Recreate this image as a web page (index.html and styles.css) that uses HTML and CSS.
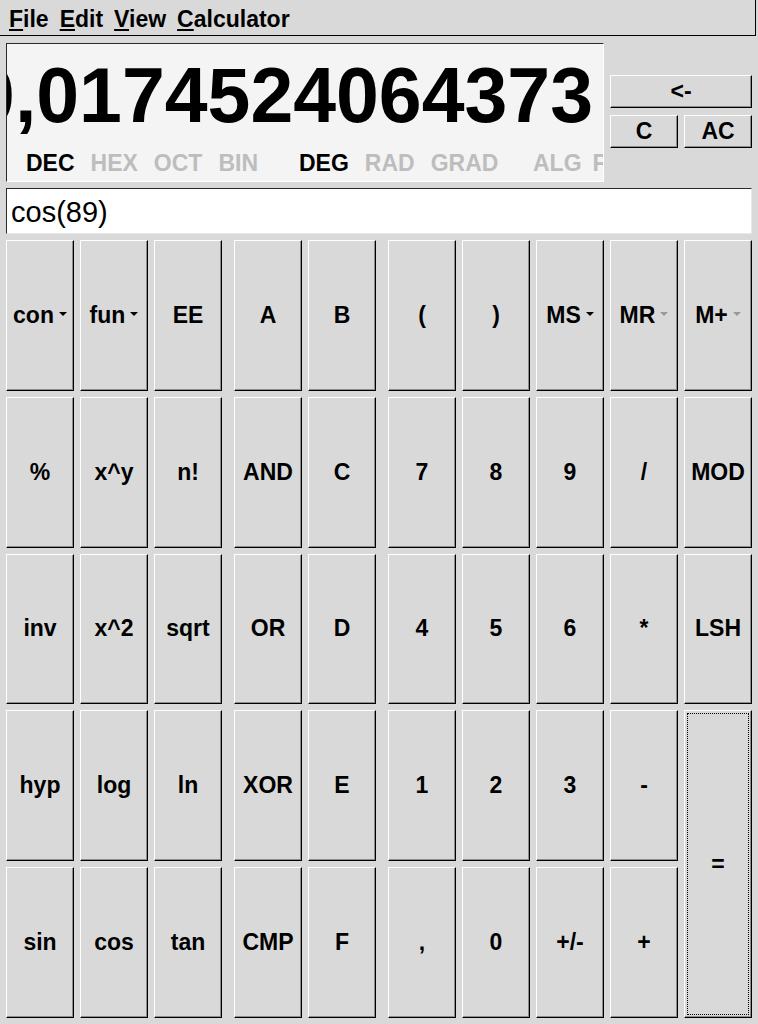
FILE: index.html
```html
<!DOCTYPE html>
<html lang="en">
<head>
    <meta charset="UTF-8">
    <meta name="viewport" content="width=device-width, initial-scale=1.0">
    <title>Calculator</title>
    <link rel="stylesheet" href="styles.css">
</head>
<body>
    <div class="menubar">
        <span><u>F</u>ile</span>
        <span><u>E</u>dit</span>
        <span><u>V</u>iew</span>
        <span><u>C</u>alculator</span>
    </div>

    <div class="main">
        <div class="top">
            <div class="display">
                <div class="number"><span>0,0174524064373</span></div>
                <div class="status">
                    <div class="group base"><span class="on">DEC</span><span>HEX</span><span>OCT</span><span>BIN</span></div>
                    <div class="group angle"><span class="on">DEG</span><span>RAD</span><span>GRAD</span></div>
                    <div class="group mode"><span>ALG</span><span>F</span></div>
                </div>
            </div>
            <div class="edit-keys">
                <button class="key small">&lt;-</button>
                <div class="pair">
                    <button class="key small">C</button>
                    <button class="key small">AC</button>
                </div>
            </div>
        </div>

        <input type="text" class="entry" value="cos(89)">

        <div class="keypad">
            <!-- functions -->
            <div class="block three">
                <button class="key">con<i class="arrow"></i></button>
                <button class="key">fun<i class="arrow"></i></button>
                <button class="key">EE</button>
                <button class="key">%</button>
                <button class="key">x^y</button>
                <button class="key">n!</button>
                <button class="key">inv</button>
                <button class="key">x^2</button>
                <button class="key">sqrt</button>
                <button class="key">hyp</button>
                <button class="key">log</button>
                <button class="key">ln</button>
                <button class="key">sin</button>
                <button class="key">cos</button>
                <button class="key">tan</button>
            </div>
            <!-- logic / hex digits -->
            <div class="block two">
                <button class="key">A</button>
                <button class="key">B</button>
                <button class="key">AND</button>
                <button class="key">C</button>
                <button class="key">OR</button>
                <button class="key">D</button>
                <button class="key">XOR</button>
                <button class="key">E</button>
                <button class="key">CMP</button>
                <button class="key">F</button>
            </div>
            <!-- digits and memory -->
            <div class="block five">
                <button class="key">(</button>
                <button class="key">)</button>
                <button class="key">MS<i class="arrow"></i></button>
                <button class="key">MR<i class="arrow off"></i></button>
                <button class="key">M+<i class="arrow off"></i></button>
                <button class="key">7</button>
                <button class="key">8</button>
                <button class="key">9</button>
                <button class="key">/</button>
                <button class="key">MOD</button>
                <button class="key">4</button>
                <button class="key">5</button>
                <button class="key">6</button>
                <button class="key">*</button>
                <button class="key">LSH</button>
                <button class="key">1</button>
                <button class="key">2</button>
                <button class="key">3</button>
                <button class="key">-</button>
                <button class="key equals">=</button>
                <button class="key">,</button>
                <button class="key">0</button>
                <button class="key">+/-</button>
                <button class="key">+</button>
            </div>
        </div>
    </div>
</body>
</html>
```

FILE: styles.css
```css
body {
    margin: 0;
    padding: 0;
    background-color: #d9d9d9;
    font-family: "Liberation Sans", Arial, sans-serif;
    color: #000;
}

.menubar {
    display: flex;
    align-items: center;
    gap: 11px;
    box-sizing: border-box;
    height: 36px;
    width: 756px;
    padding: 4px 0 0 9px;
    border-bottom: 1px solid #000;
    border-right: 1px solid #000;
    font-size: 23px;
    font-weight: bold;
    line-height: 1;
}

.menubar u {
    text-decoration-thickness: 2px;
    text-underline-offset: 2px;
}

.main {
    display: flex;
    flex-direction: column;
    gap: 6px;
    padding: 7px 6px 6px 6px;
}

.top {
    display: flex;
    align-items: center;
    gap: 6px;
}

.display {
    box-sizing: border-box;
    width: 598px;
    height: 139px;
    padding: 13px 0 6px 0;
    background-color: #f4f4f4;
    border: 1px solid;
    border-color: #2a2a2a #fff #fff #2a2a2a;
    overflow: hidden;
}

.number {
    display: flex;
    justify-content: flex-end;
    padding-right: 10px;
    font-size: 77px;
    font-weight: bold;
    line-height: 77px;
    white-space: nowrap;
    overflow: hidden;
}

.status {
    display: flex;
    margin-top: 18px;
    padding-left: 19px;
    font-size: 23px;
    font-weight: bold;
    line-height: 23px;
    white-space: nowrap;
    color: #bdbdbd;
}

.status .on {
    color: #000;
}

.group {
    display: flex;
    flex: none;
    gap: 16px;
}

.group.base {
    width: 273px;
}

.group.angle {
    width: 234px;
}

.group.mode {
    gap: 11px;
}

.edit-keys {
    display: flex;
    flex-direction: column;
    gap: 7px;
    width: 142px;
    margin-top: -2px;
}

.pair {
    display: flex;
    gap: 6px;
}

.pair .key {
    flex: 1;
}

.entry {
    box-sizing: border-box;
    height: 46px;
    margin: 0;
    padding: 3px 4px 0 4px;
    background-color: #fff;
    border: 1px solid;
    border-color: #2a2a2a #e8e8e8 #e8e8e8 #2a2a2a;
    font-family: "Liberation Sans", Arial, sans-serif;
    font-size: 29px;
    color: #000;
    outline: none;
}

.keypad {
    display: flex;
    gap: 12px;
    height: 778px;
}

.block {
    display: grid;
    grid-template-rows: repeat(5, 1fr);
    gap: 6px;
}

.block.three {
    grid-template-columns: repeat(3, 68px);
}

.block.two {
    grid-template-columns: repeat(2, 68px);
}

.block.five {
    grid-template-columns: repeat(5, 68px);
}

.key {
    display: flex;
    align-items: center;
    justify-content: center;
    margin: 0;
    padding: 0;
    background-color: #d9d9d9;
    border: 1px solid;
    border-color: #fff #000 #000 #fff;
    box-shadow: inset -1px -1px 0 #8c8c8c;
    font-family: "Liberation Sans", Arial, sans-serif;
    font-size: 23px;
    font-weight: bold;
    color: #000;
    white-space: nowrap;
}

.key.small {
    height: 33px;
}

.key.equals {
    grid-column: 5;
    grid-row: 4 / 6;
    outline: 1px dotted #000;
    outline-offset: -4px;
}

.arrow {
    display: inline-block;
    width: 0;
    height: 0;
    margin: 0 0 3px 5px;
    border-left: 4px solid transparent;
    border-right: 4px solid transparent;
    border-top: 4px solid #000;
}

.arrow.off {
    border-top-color: #999;
}
```
